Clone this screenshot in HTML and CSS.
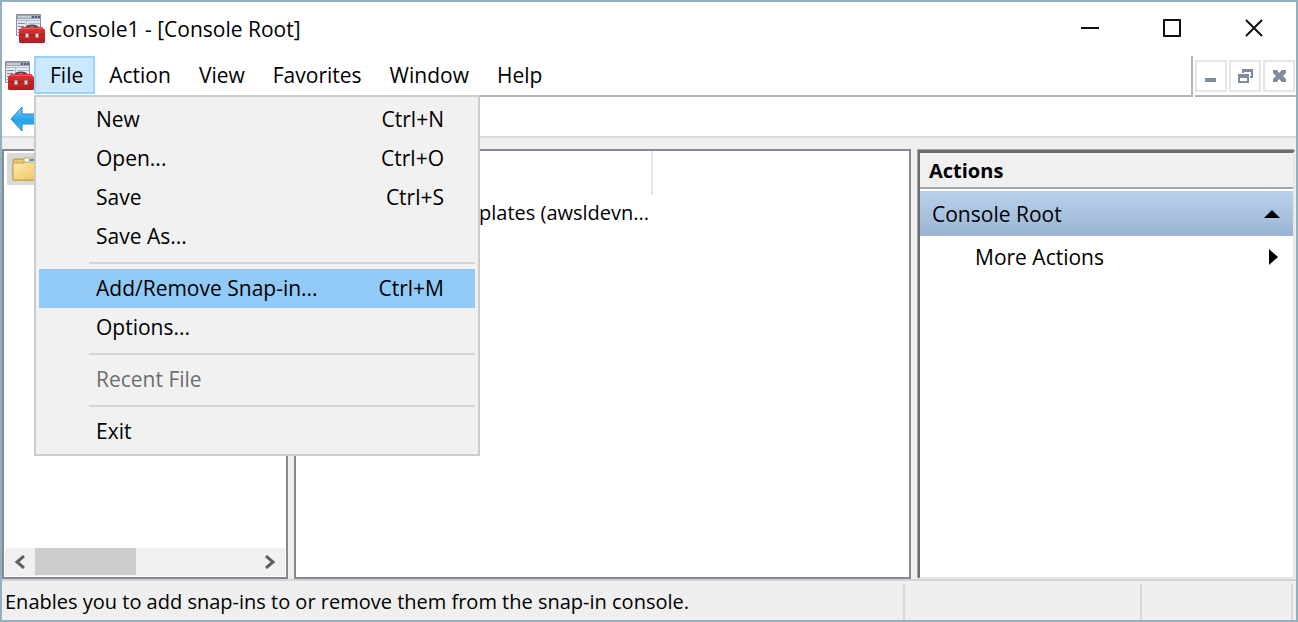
FILE: index.html
```html
<!DOCTYPE html>
<html lang="en">
<head>
  <meta charset="UTF-8">
  <title>Console1 - [Console Root]</title>
  <meta name="viewport" content="width=device-width, initial-scale=1.0">
  <link rel="stylesheet" href="styles.css">
</head>
<body>
  <svg class="defs" width="0" height="0" aria-hidden="true">
    <defs>
      <linearGradient id="red" x1="0" y1="0" x2="0" y2="1">
        <stop offset="0" stop-color="#d9383a"/><stop offset=".5" stop-color="#cf2426"/><stop offset="1" stop-color="#b51a1d"/>
      </linearGradient>
      <linearGradient id="sky" x1="0" y1="0" x2="0" y2="1">
        <stop offset="0" stop-color="#7fd2fa"/><stop offset=".55" stop-color="#22a4ee"/><stop offset="1" stop-color="#3cbcf5"/>
      </linearGradient>
      <linearGradient id="gold" x1="0" y1="0" x2="1" y2="1">
        <stop offset="0" stop-color="#fdedb0"/><stop offset="1" stop-color="#ecc35c"/>
      </linearGradient>
      <symbol id="toolbox" viewBox="0 0 30 30">
        <path fill="#e3e8ef" stroke="#8b9099" d="M.5 .5h24v21H.5z"/>
        <path fill="#9aa3b0" d="M1 1h23v4H1z"/>
        <path fill="#c3cdda" d="M2 2h13v2H2z"/>
        <path fill="#4a5f86" d="M16 2h2v2h-2zM19 2h2v2h-2zM22 2h2v2h-2z"/>
        <path fill="#b3bccb" d="M1 6h23v1H1zM10 7h1v14h-1zM12 9h12v1H12z"/>
        <path fill="#7f8a9f" d="M2 9h7v1H2zM2 12h6v1H2zM2 15h2v1H2zM2 18h1v1H2z"/>
        <path fill="none" stroke="#4b4b4d" stroke-width="2" d="M10 14c1-2 3-2.500 6-2.500s5 .5 6 2.500"/>
        <path fill="url(#red)" d="M6 13h20l3 3v12l-1 1H4l-1-1V16z"/>
        <path fill="#a9191c" d="M3 20h26v1H3z"/>
        <path fill="#e8615c" d="M6 14h20v1H6z"/>
        <path fill="#9b8481" d="M9 19h4v5H9zM19 19h4v5h-4z"/>
        <path fill="#e0dad6" d="M10 20h2v3h-2zM20 20h2v3h-2z"/>
      </symbol>
    </defs>
  </svg>

  <header class="titlebar">
    <svg class="app-icon" width="30" height="30"><use href="#toolbox"/></svg>
    <h1 class="title">Console1 - [Console Root]</h1>
    <div class="window-buttons">
      <button type="button" aria-label="Minimize"><svg width="20" height="20"><path d="M1 10h18"/></svg></button>
      <button type="button" aria-label="Maximize"><svg width="20" height="20"><path d="M2 2h16v16H2z"/></svg></button>
      <button type="button" aria-label="Close"><svg width="20" height="20"><path d="M2 2l16 16M18 2L2 18"/></svg></button>
    </div>
  </header>

  <div class="menubar">
    <svg class="doc-icon" width="30" height="30"><use href="#toolbox"/></svg>
    <nav class="menus">
      <div class="menu-wrap">
        <button type="button" class="menu open">File</button>
        <div class="dropdown">
          <button type="button" class="item"><span>New</span><kbd>Ctrl+N</kbd></button>
          <button type="button" class="item"><span>Open...</span><kbd>Ctrl+O</kbd></button>
          <button type="button" class="item"><span>Save</span><kbd>Ctrl+S</kbd></button>
          <button type="button" class="item"><span>Save As...</span></button>
          <hr>
          <button type="button" class="item active"><span>Add/Remove Snap-in...</span><kbd>Ctrl+M</kbd></button>
          <button type="button" class="item"><span>Options...</span></button>
          <hr>
          <button type="button" class="item" disabled><span>Recent File</span></button>
          <hr>
          <button type="button" class="item"><span>Exit</span></button>
        </div>
      </div>
      <button type="button" class="menu">Action</button>
      <button type="button" class="menu">View</button>
      <button type="button" class="menu">Favorites</button>
      <button type="button" class="menu">Window</button>
      <button type="button" class="menu">Help</button>
    </nav>
    <div class="doc-buttons">
      <button type="button" aria-label="Minimize document"><svg width="16" height="16"><path d="M2 10h11v4H2z"/></svg></button>
      <button type="button" aria-label="Restore document"><svg width="16" height="16"><path fill-rule="evenodd" d="M5 1h11v9h-3V8h1V4H7v1H5zM1 6h11v9H1zM3 10v3h7v-3z"/></svg></button>
      <button type="button" aria-label="Close document"><svg width="16" height="16"><path d="M2 2h4l2 3 3-3h4v3l-3 3 3 3v3h-4l-3-3-2 3H2v-3l3-3-3-3z"/></svg></button>
    </div>
  </div>

  <div class="toolbar">
    <button type="button" aria-label="Back">
      <svg width="28" height="28"><path fill="url(#sky)" stroke="#2f83b8" d="M2 14L13 2v7h14v10H13v7z"/></svg>
    </button>
  </div>

  <main class="panes">
    <section class="pane tree">
      <div class="node">
        <svg width="30" height="28">
          <path fill="#e9c86f" stroke="#b9933c" d="M2 25V6q0-2 2-2h8l2 2h15v19z"/>
          <path fill="#fff" stroke="#c79d45" d="M13 3h14v5H13z"/>
          <path fill="#3d9be0" d="M18 4h7v2h-7z"/>
          <path fill="url(#gold)" stroke="#c79d45" d="M2 25V8h11l2-1h13v18z"/>
        </svg>
      </div>
      <div class="scrollbar">
        <button type="button" aria-label="Scroll left"><svg width="12" height="14"><path d="M10 1L3 7l7 6"/></svg></button>
        <div class="track"><div class="thumb"></div></div>
        <button type="button" aria-label="Scroll right"><svg width="12" height="14"><path d="M2 1l7 6-7 6"/></svg></button>
      </div>
    </section>

    <section class="pane list">
      <table>
        <thead><tr><th></th></tr></thead>
        <tbody><tr><td>plates (awsldevn...</td></tr></tbody>
      </table>
    </section>

    <aside class="actions">
      <h2>Actions</h2>
      <button type="button" class="group"><span>Console Root</span><svg width="16" height="16"><path d="M0 12l8-8 8 8z"/></svg></button>
      <button type="button" class="more"><span>More Actions</span><svg width="16" height="16"><path d="M5 0l9 8-9 8z"/></svg></button>
    </aside>
  </main>

  <footer class="statusbar">
    <span>Enables you to add snap-ins to or remove them from the snap-in console.</span>
    <span></span>
    <span></span>
  </footer>
</body>
</html>
```
FILE: styles.css
```css
* { box-sizing: border-box; }
body { margin: 0; min-height: 100vh; display: flex; flex-direction: column; border: 2px solid #93b0be; background: #efefef; color: #000; font: 21px/28px "Open Sans", "Noto Sans", sans-serif; }
button { margin: 0; padding: 0; border: 0; background: none; color: inherit; font: inherit; text-align: left; }
svg { display: block; flex: none; }
.defs { position: absolute; }

.titlebar { display: flex; align-items: center; height: 54px; padding-left: 14px; background: #fff; }
.title { flex: 1; margin: 0 0 0 3px; font-size: 21px; font-weight: 400; }
.window-buttons { display: flex; padding-right: 1px; }
.window-buttons button { width: 82px; height: 52px; padding-bottom: 2px; display: flex; align-items: center; justify-content: center; }
.window-buttons path { fill: none; stroke: #111; stroke-width: 2; }

.menubar { display: flex; height: 41px; background: #fff; }
.doc-icon { margin: 5px -1px 0 3px; }
.menus { flex: 1; display: flex; align-items: flex-start; border-right: 2px solid #b5b5b5; border-bottom: 2px solid #b5b5b5; }
.menu { height: 38px; padding: 0 14px; }
.menu.open { padding: 0 10px 0 14px; border: 2px solid #99d1ff; background: #cce8ff; }
.menu-wrap { position: relative; }
.doc-buttons { display: flex; gap: 2px; margin-left: 2px; padding: 4px 1px 0 0; border-bottom: 2px solid #b5b5b5; }
.doc-buttons button { width: 32px; height: 32px; display: flex; align-items: center; justify-content: center; border: 2px solid #e6e6e8; }
.doc-buttons path { fill: #7e8c9b; }

.dropdown { position: absolute; z-index: 1; top: 39px; left: 0; width: 446px; padding: 3px; border: 2px solid #ccc; background: #f1f1f1; }
.item { display: flex; justify-content: space-between; align-items: center; width: 100%; height: 39px; padding: 0 31px 1px 57px; }
.item kbd { font: inherit; }
.item.active { background: #91c9f7; }
.item:disabled { color: #6d6d6d; }
.dropdown hr { height: 13px; margin: 0 0 0 50px; border: solid transparent; border-width: 6px 0 5px; background: #d5d5d5 padding-box; }

.toolbar { height: 41px; padding: 8px 7px 0; border-bottom: 2px solid #dcdcdc; background: #fff; }

.panes { flex: 1; display: grid; grid-template-columns: 286px 1fr 378px; gap: 6px; padding: 11px 1px 0 0; }
.pane { display: flex; flex-direction: column; border: 2px solid #868a94; background: #fff; }
.tree { justify-content: space-between; padding: 1px; }
.node { padding: 2px 4px; background: #d9d9d9; margin: 1px 0 0 2px; }
.scrollbar { display: flex; height: 28px; background: #f0f0f0; }
.scrollbar button { width: 30px; display: flex; align-items: center; justify-content: center; }
.scrollbar path { fill: none; stroke: #606060; stroke-width: 3; }
.track { flex: 1; }
.thumb { width: 46%; height: 27px; background: #cdcdcd; }

.list { font-size: 20px; }
.list table { width: 357px; border-collapse: collapse; }
.list th { height: 44px; padding: 0; border-right: 2px solid #e5e5e5; }
.list td { height: 36px; padding: 0 0 0 183px; white-space: nowrap; }

.actions { border: 2px solid; border-width: 3px 2px 2px; border-color: #6c6c6c #e6e6e6 #e6e6e6 #6c6c6c; background: #fff; box-shadow: -1px -1px #a5a5a5; margin: 1px 0 0 1px; }
.actions h2 { margin: 0; height: 36px; padding: 0 9px; border-bottom: 2px solid #a5a5a5; background: #f0f0f0; font-size: 20px; line-height: 36px; }
.actions button { display: flex; justify-content: space-between; align-items: center; width: 100%; padding-right: 13px; }
.group { height: 45px; margin-top: 2px; padding-left: 12px; background: linear-gradient(#b9d1ea, #99b4d4); }
.more { height: 41px; padding-left: 55px; }

.statusbar { display: grid; grid-template-columns: 1fr 237px 151px; height: 41px; padding: 3px 3px 2px; border-top: 2px solid #d4d4d4; font-size: 20px; }
.statusbar span { border-right: 2px solid #d9d9d9; line-height: 36px; white-space: nowrap; }
```
